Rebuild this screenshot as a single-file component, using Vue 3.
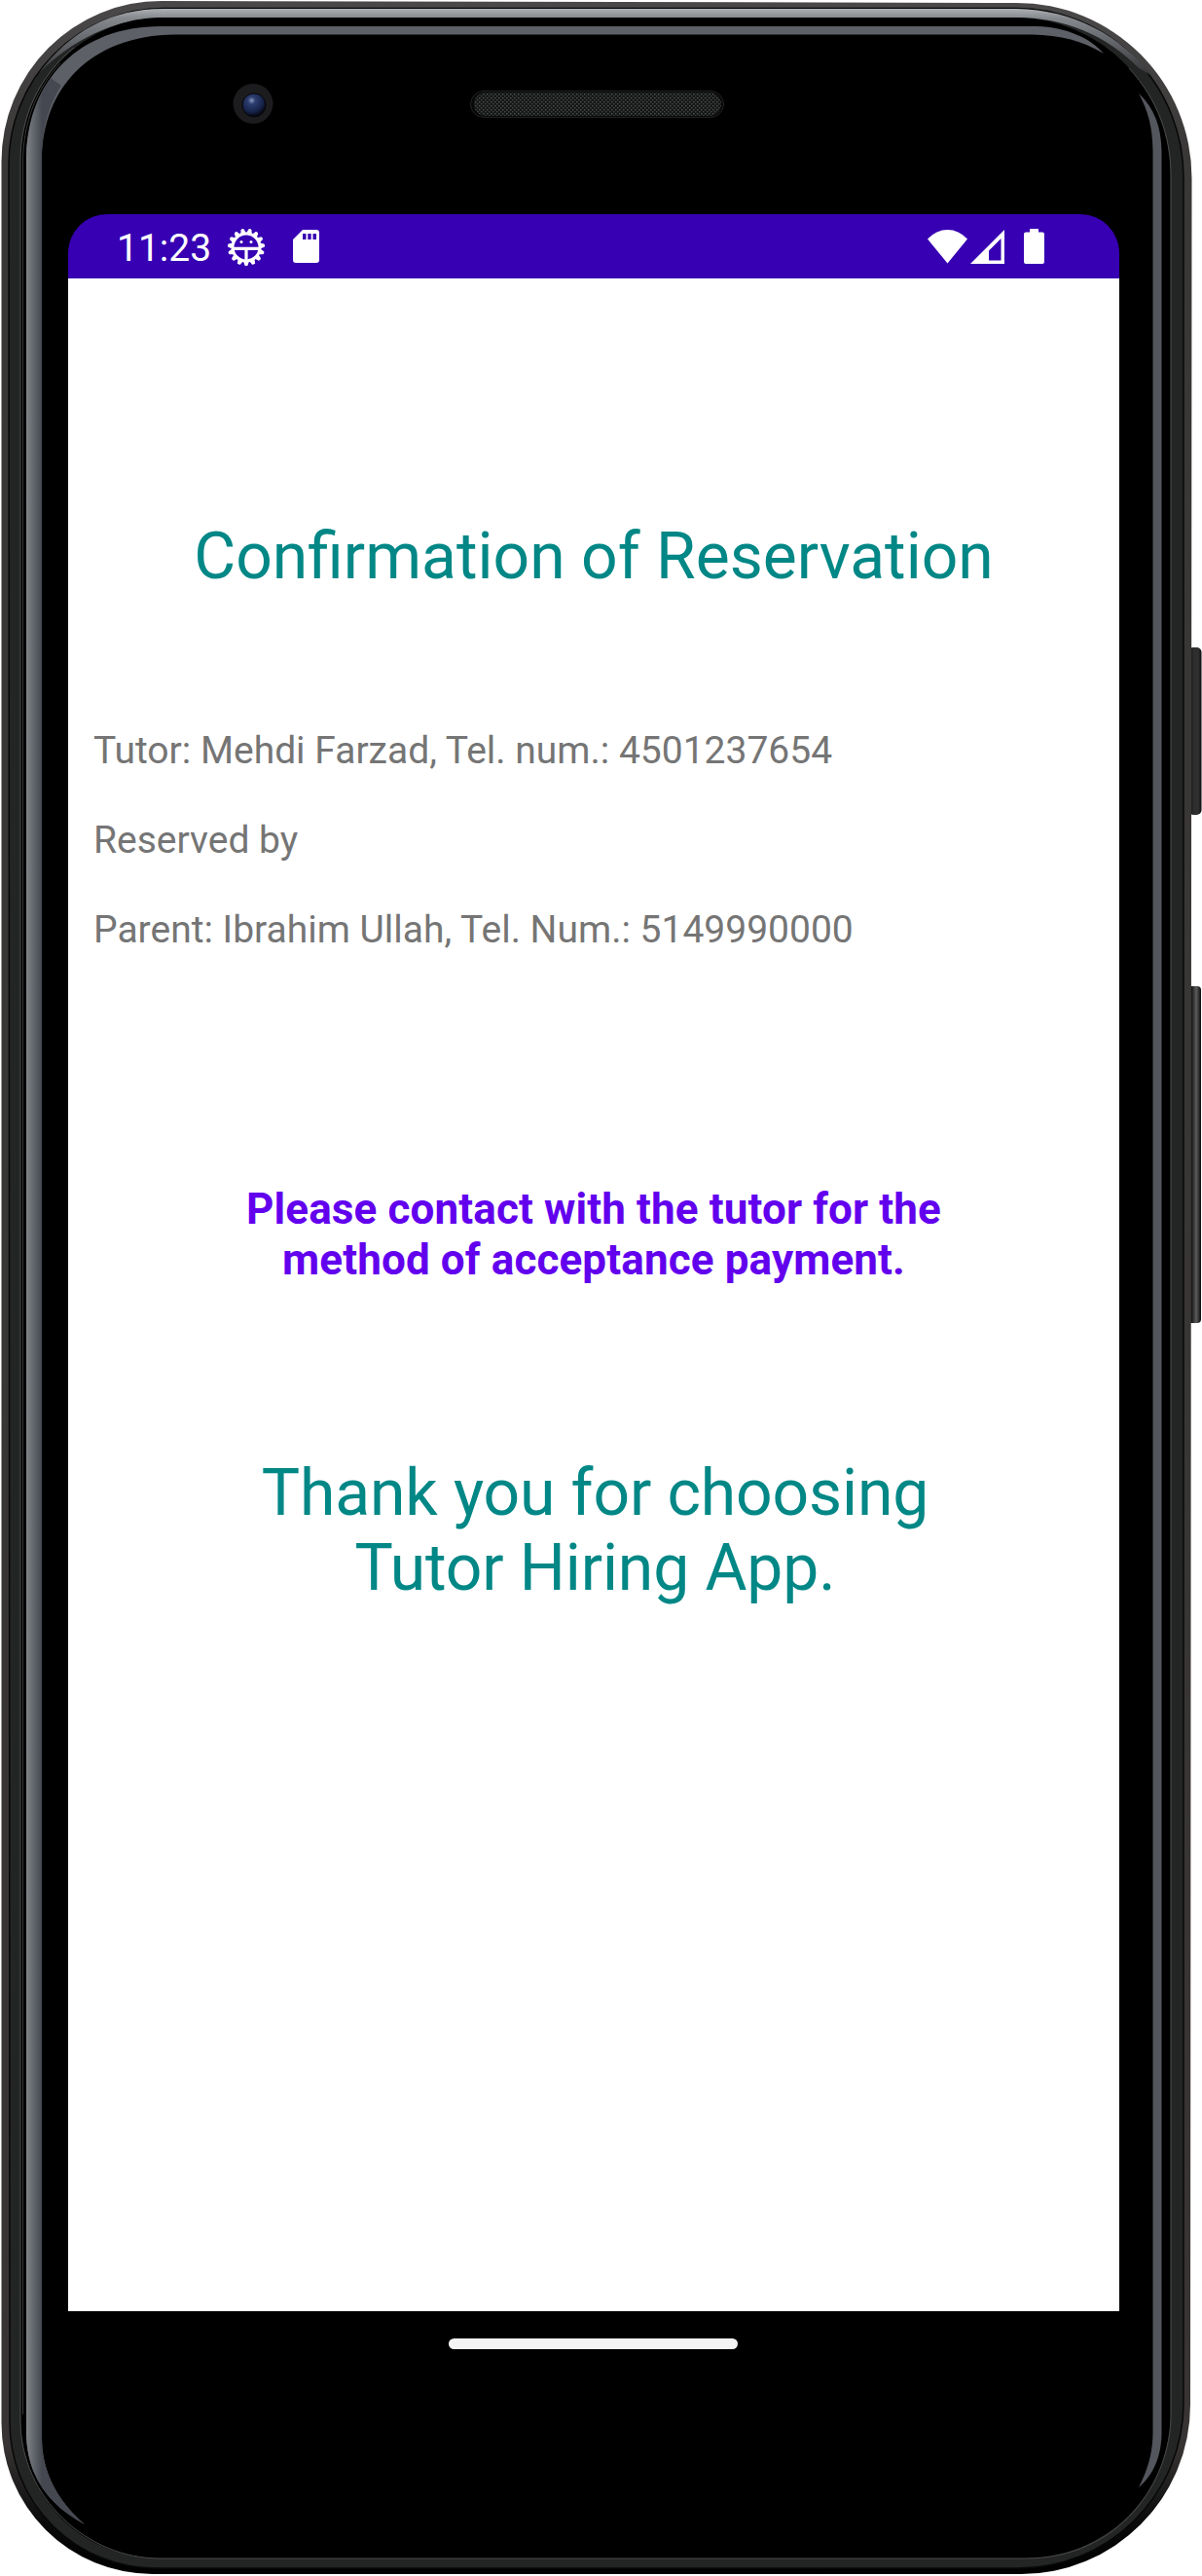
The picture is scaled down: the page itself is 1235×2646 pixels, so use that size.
<script setup>
const details = [
  'Tutor: Mehdi Farzad, Tel. num.: 4501237654',
  'Reserved by',
  'Parent: Ibrahim Ullah, Tel. Num.: 5149990000',
]
const teeth = Array.from({ length: 15 }, (_, i) => i * 24 + 12)
</script>

<template>
  <div class="device">
    <svg class="shell" viewBox="0 0 1235 2646" width="1235" height="2646" aria-hidden="true">
      <defs>
        <linearGradient id="rimShine" gradientUnits="userSpaceOnUse" x1="0" y1="8" x2="0" y2="90">
          <stop offset="0" stop-color="#b0b3b7" />
          <stop offset=".13" stop-color="#85888c" />
          <stop offset=".4" stop-color="#66696e" />
          <stop offset="1" stop-color="#222" />
        </linearGradient>
        <linearGradient id="leftGlass" gradientUnits="userSpaceOnUse" x1="26" y1="0" x2="43" y2="0">
          <stop offset="0" stop-color="#85888a" />
          <stop offset=".45" stop-color="#666a71" />
          <stop offset="1" stop-color="#454850" />
        </linearGradient>
        <linearGradient id="button" x1="0" y1="0" x2="1" y2="0">
          <stop offset="0" stop-color="#080808" />
          <stop offset=".4" stop-color="#2d2d2d" />
          <stop offset=".75" stop-color="#303030" />
          <stop offset="1" stop-color="#0c0c0c" />
        </linearGradient>
        <linearGradient id="volume" x1="0" y1="0" x2="1" y2="0">
          <stop offset="0" stop-color="#050505" />
          <stop offset=".35" stop-color="#1f1f1f" />
          <stop offset=".65" stop-color="#5c5c5c" />
          <stop offset="1" stop-color="#090909" />
        </linearGradient>
        <linearGradient id="outer" x1="0" y1="0" x2="0" y2="1">
          <stop offset="0" stop-color="#4a4848" />
          <stop offset=".06" stop-color="#3a3737" />
          <stop offset=".95" stop-color="#383434" />
          <stop offset=".98" stop-color="#0a0a0a" />
          <stop offset="1" stop-color="#000" />
        </linearGradient>
        <radialGradient id="lens" cx=".4" cy=".3" r=".65">
          <stop offset="0" stop-color="#8a98bd" />
          <stop offset=".25" stop-color="#2c3d70" />
          <stop offset=".75" stop-color="#16234a" />
          <stop offset="1" stop-color="#080b18" />
        </radialGradient>
        <pattern id="mesh" width="4" height="4" patternUnits="userSpaceOnUse">
          <rect width="4" height="4" fill="#141616" />
          <rect width="1.5" height="1.5" fill="#4c4f4e" />
          <rect x="2" y="2" width="1.5" height="1.5" fill="#424544" />
        </pattern>
      </defs>
      <rect x="1221" y="665" width="13.500" height="172" rx="5" fill="url(#button)" />
      <rect x="1220" y="1013" width="14" height="346" rx="4" fill="url(#volume)" />
      <path d="M1.500 166A164 165 0 0 1 166 1L1044 3A180 180 0 0 1 1224.500 183L1223 2470A174 174 0 0 1 1049 2644H157A155 155 0 0 1 1.500 2489Z" fill="url(#outer)" />
      <path d="M9 168A160 160 0 0 1 168 8.500H1044A172 174 0 0 1 1216 183V2470A170 170 0 0 1 1046 2638H160A150 150 0 0 1 10 2489Z" fill="#232424" stroke="#080808" stroke-width="1.500" />
      <path d="M40 75C72 32 114 9 168 9H1044C1104 10 1150 36 1184 78L1170 70C1136 36 1094 18 1044 18H168C115 19 74 42 40 75Z" fill="url(#rimShine)" />
      <path d="M21 165A145 148 0 0 1 166 18H1044A160 163 0 0 1 1203 181V2480A150 148 0 0 1 1053 2628H164A142 142 0 0 1 21 2486Z" fill="#000" />
      <path d="M21 2486V165C21 120 40 78 76 49M1160 70C1190 103 1203 140 1203 181V2480C1203 2550 1150 2628 1053 2628H164C90 2628 21 2566 21 2486" fill="none" stroke="#4c4c4c" stroke-width="1" />
      <path d="M23.500 2480V165C24 125 38 90 62 65" fill="none" stroke="#3a3a3a" stroke-width="1" />
      <path d="M27 162C28 82 82 27 165 27H1065C1096 28 1120 39 1134 55C1112 42 1090 36 1060 35.500H180C92 36 43 92 43 165V2505C43 2540 60 2570 87 2593C50 2573 28 2544 27 2500Z" fill="#5d6067" />
      <path d="M27 162C28 128 37 102 52 80L63 88C50 108 43 132 43 165V2505C43 2540 60 2570 87 2593C50 2573 28 2544 27 2500Z" fill="url(#leftGlass)" />
      <path d="M1170 96C1186 111 1193 130 1193.500 155V2500C1193 2524 1185 2542 1170 2555C1180 2535 1184 2520 1184.500 2500V155C1184 130 1180 115 1170 96Z" fill="#54565d" />
      <circle cx="260" cy="106.500" r="20.500" fill="#1c1c1e" />
      <circle cx="261" cy="108" r="12" fill="url(#lens)" stroke="#050509" />
      <rect x="483.500" y="93.500" width="260" height="27" rx="13.500" fill="#080808" stroke="#222225" />
      <rect x="487" y="95" width="254" height="24" rx="12" fill="url(#mesh)" />
    </svg>

    <main class="screen">
      <header class="status">
        <span class="clock">11:23</span>
        <svg class="gear" width="40" height="40" viewBox="-20 -20 40 40">
          <path v-for="a in teeth" :key="a" d="M-3 -14L-1.600 -18.600Q0 -20 1.600 -18.600L3 -14Z" fill="#fff" :transform="`rotate(${a})`" />
          <circle r="14" fill="none" stroke="#fff" stroke-width="3" />
          <path d="M-14 1.300H14M0 1V15" stroke="#fff" stroke-width="3.200" />
          <circle cx="-5" cy="-5.500" r="1.500" fill="#fff" />
          <circle cx="5" cy="-5.500" r="1.500" fill="#fff" />
        </svg>
        <svg class="sd" width="27" height="34" viewBox="0 0 27 34">
          <path fill="#fff" fill-rule="evenodd" d="M10 0H24Q27 0 27 3V31Q27 34 24 34H3Q0 34 0 31V10ZM10 4V10H13.500V4ZM15.300 4V10H18.700V4ZM20.500 4V10H24V4Z" />
        </svg>
        <div class="system">
          <svg width="41" height="35" viewBox="0 0 41 35"><path fill="#fff" d="M0 9.500Q9 0 20.500 0T41 9.500L20.500 34.500Z" /></svg>
          <svg class="signal" width="35" height="35" viewBox="0 0 35 35"><path fill="#fff" fill-rule="evenodd" d="M35 0V35H0ZM31.500 9L19 21.500V31.500H31.500Z" /></svg>
          <svg class="battery" width="21" height="36" viewBox="0 0 21 36"><path fill="#fff" d="M6 0H15V3.500H19Q21 3.500 21 5.500V34Q21 36 19 36H2Q0 36 0 34V5.500Q0 3.500 2 3.500H6Z" /></svg>
        </div>
      </header>
      <section class="content">
        <h1>Confirmation of Reservation</h1>
        <div class="details">
          <p v-for="line in details" :key="line">{{ line }}</p>
        </div>
        <p class="notice">Please contact with the tutor for the<br />method of acceptance payment.</p>
        <p class="thanks">Thank you for choosing<br />Tutor Hiring App.</p>
      </section>
      <footer class="nav"><span class="pill"></span></footer>
    </main>
  </div>
</template>

<style>
body { margin: 0; background: #fff; }
</style>

<style scoped>
.device {
  display: grid;
  width: 1235px;
  height: 2646px;
  overflow: hidden;
  font-family: Roboto, sans-serif;
}
.shell, .screen { grid-area: 1 / 1; }
.shell { display: block; }
.screen {
  z-index: 1;
  display: flex;
  flex-direction: column;
  width: 1080px;
  height: 2220px;
  margin: 220px 0 0 70px;
}
.status {
  box-sizing: border-box;
  display: flex;
  align-items: center;
  height: 66px;
  padding: 0 77px 0 50px;
  border-radius: 40px 40px 0 0;
  background: #3700b3;
  color: #fff;
}
.clock { width: 113px; font-size: 39px; line-height: 66px; padding-top: 3px; box-sizing: border-box; }
.gear { margin-top: 1px; }
.sd { margin-left: 28px; }
.system { display: flex; align-items: center; margin-left: auto; }
.signal { margin-left: 3px; }
.battery { margin-left: 20px; }
.content {
  box-sizing: border-box;
  height: 2088px;
  padding-top: 247px;
  background: #fff;
  text-align: center;
}
h1, p { margin: 0; font-weight: 400; white-space: nowrap; }
h1, .thanks { color: #018786; font-size: 66px; line-height: 77.3px; }
.details {
  margin-top: 114.7px;
  padding-left: 26px;
  text-align: left;
  color: #757575;
  font-size: 39px;
  line-height: 92px;
}
.notice {
  margin-top: 215px;
  color: #6200ee;
  font-size: 44px;
  font-weight: 700;
  line-height: 52px;
  letter-spacing: 0.12px;
}
.thanks { margin-top: 175px; padding-left: 3px; letter-spacing: -0.12px; }
.nav { display: flex; justify-content: center; height: 66px; align-items: center; }
.pill { width: 297px; height: 11px; margin-right: 1px; border-radius: 6px; background: #f4f4f4; }
</style>
